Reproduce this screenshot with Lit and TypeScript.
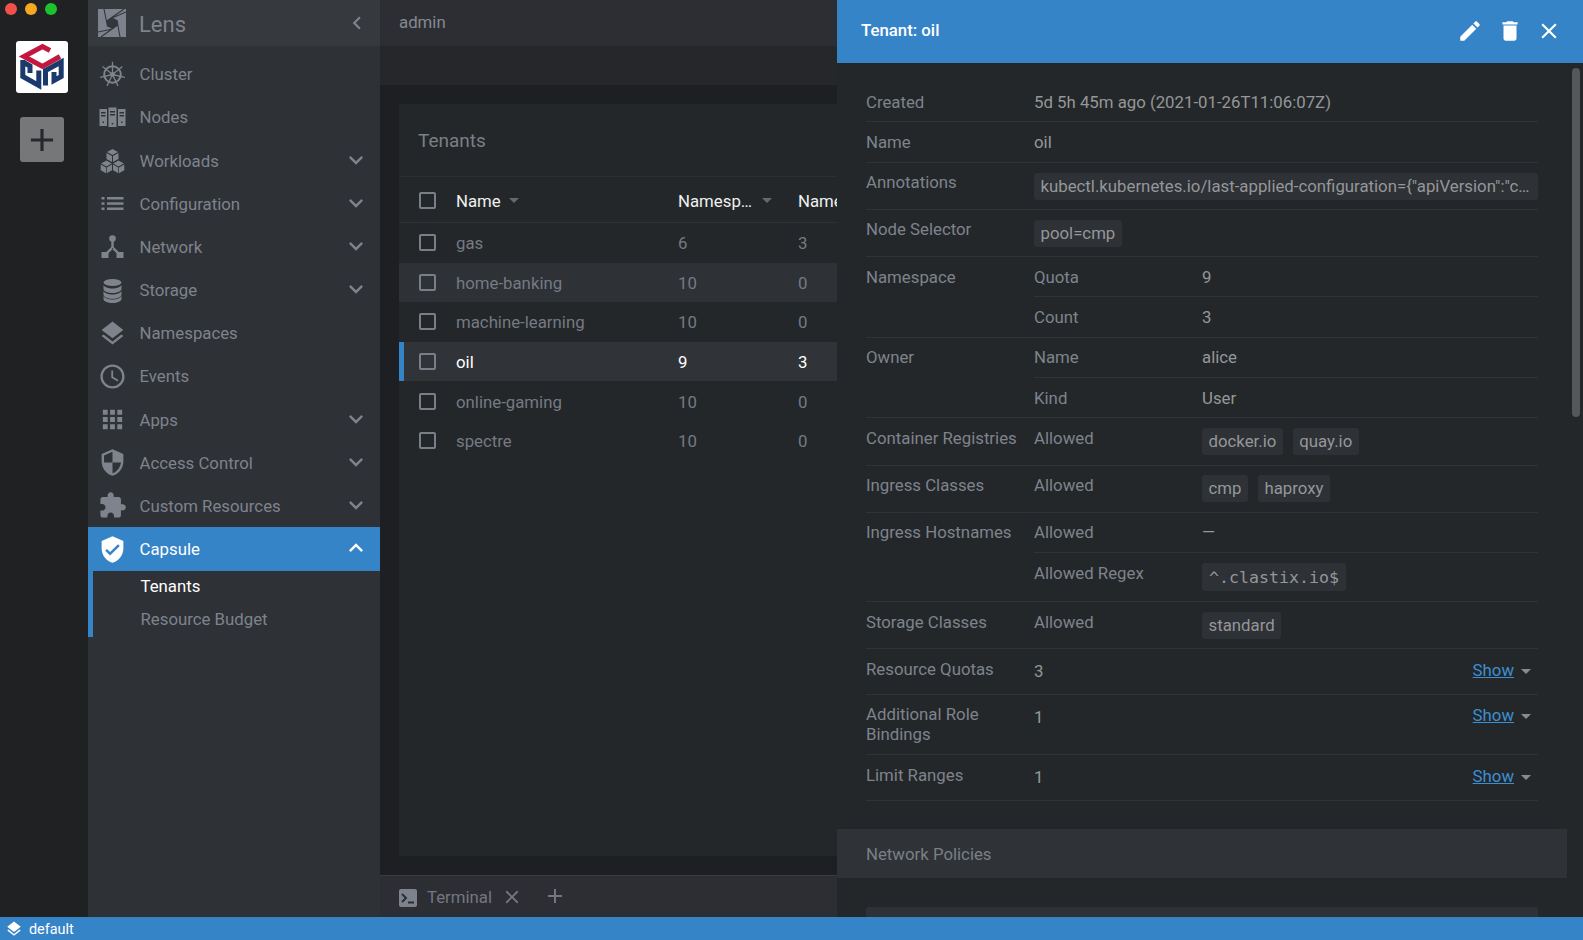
import { LitElement, html, css, svg } from "lit";
import { customElement } from "lit/decorators.js";

const M = (d: string) => svg`<path d=${d}></path>`;
const P = {
  more: "M16.59 8.59L12 13.17 7.41 8.59 6 10l6 6 6-6z",
  less: "M12 8l-6 6 1.41 1.41L12 10.83l4.59 4.58L18 14z",
  left: "M15.41 7.41L14 6l-6 6 6 6 1.41-1.41L10.83 12z",
  layers: "M11.99 18.54l-7.37-5.73L3 14.07l9 7 9-7-1.63-1.27-7.38 5.74zM12 16l7.36-5.73L21 9l-9-7-9 7 1.63 1.27L12 16z",
  clock: "M11.99 2C6.47 2 2 6.48 2 12s4.47 10 9.99 10C17.52 22 22 17.52 22 12S17.52 2 11.99 2zM12 20c-4.42 0-8-3.58-8-8s3.58-8 8-8 8 3.58 8 8-3.58 8-8 8zm.5-13H11v6l5.25 3.15.75-1.23-4.5-2.67z",
  apps: "M4 8h4V4H4v4zm6 12h4v-4h-4v4zm-6 0h4v-4H4v4zm0-6h4v-4H4v4zm6 0h4v-4h-4v4zm6-10v4h4V4h-4zm-6 4h4V4h-4v4zm6 6h4v-4h-4v4zm0 6h4v-4h-4v4z",
  shield: "M12 1L3 5v6c0 5.55 3.84 10.74 9 12 5.16-1.26 9-6.45 9-12V5l-9-4zm0 10.99h7c-.53 4.12-3.28 7.79-7 8.94V12H5V6.3l7-3.11v8.8z",
  puzzle: "M20.5 11H19V7c0-1.1-.9-2-2-2h-4V3.5C13 2.12 11.88 1 10.5 1S8 2.12 8 3.5V5H4c-1.1 0-1.99.9-1.99 2v3.8H3.5c1.49 0 2.7 1.21 2.7 2.7s-1.21 2.7-2.7 2.7H2V20c0 1.1.9 2 2 2h3.8v-1.5c0-1.49 1.21-2.7 2.7-2.7 1.49 0 2.7 1.21 2.7 2.7V22H17c1.1 0 2-.9 2-2v-4h1.5c1.38 0 2.5-1.12 2.5-2.5S21.88 11 20.5 11z",
  verified: "M12 1L3 5v6c0 5.55 3.84 10.74 9 12 5.16-1.26 9-6.45 9-12V5l-9-4zm-2 16l-4-4 1.41-1.41L10 14.17l6.59-6.59L18 9l-8 8z",
  edit: "M3 17.25V21h3.75L17.81 9.94l-3.75-3.75L3 17.25zM20.71 7.04c.39-.39.39-1.02 0-1.41l-2.34-2.34c-.39-.39-1.02-.39-1.41 0l-1.83 1.83 3.75 3.75 1.83-1.83z",
  trash: "M6 19c0 1.1.9 2 2 2h8c1.1 0 2-.9 2-2V7H6v12zM19 4h-3.5l-1-1h-5l-1 1H5v2h14V4z",
  close: "M19 6.41L17.59 5 12 10.59 6.41 5 5 6.41 10.59 12 5 17.59 6.41 19 12 13.41 17.59 19 19 17.59 13.41 12z",
  add: "M19 13h-6v6h-2v-6H5v-2h6V5h2v6h6v2z",
};

const mat = (d: string, cls = "ic") => html`<svg class=${cls} viewBox="0 0 24 24" fill="currentColor">${M(d)}</svg>`;

const wheel = html`<svg class="ic" viewBox="0 0 29 29" fill="none" stroke="currentColor">
  <circle cx="14.5" cy="14.5" r="8.3" stroke-width="2"></circle>
  <circle cx="14.5" cy="14.5" r="2.4" fill="currentColor" stroke="none"></circle>
  <path stroke-width="1.3" d="M14.5 14.5V1.800M14.5 14.500L24.400 6.600M14.500 14.500L26.900 17.300M14.500 14.500L20 25.900M14.500 14.500L9 25.900M14.500 14.500L2.100 17.300M14.500 14.500L4.600 6.600"></path>
</svg>`;

const nodes = html`<svg class="ic" viewBox="0 0 29 29" fill="currentColor">
  <path fill-rule="evenodd" d="M1.5 6h7.5v17H1.5zM3 9v1.5h4.5V9zM3 12v1.5h4.5V12zM4.5 18.5v1.5H6v-1.5z"></path>
  <path fill-rule="evenodd" d="M10.5 4.5h8V24h-8zM12 8v1.5h5V8zM12 11v1.5h5V11zM13.7 20v1.5h1.6V20z"></path>
  <path fill-rule="evenodd" d="M20 6h7.5v17H20zM21.5 9v1.5H26V9zM21.5 12v1.5H26V12zM23 18.5v1.5h1.5v-1.5z"></path>
</svg>`;

const cubes = html`<svg class="ic" viewBox="0 0 29 29" fill="currentColor">
  <path d="M14.5 3l5.5 3-5.5 3-5.5-3zM8.5 7l5.5 3v6l-5.5-3zM20.5 7l-5.5 3v6l5.5-3z"></path>
  <path d="M8.5 14.6l5.3 3-5.3 3-5.4-3zM2.7 18.5l5.3 3v5.700l-5.300-3zM14 18.500l-5.300 3v5.700l5.300-3z"></path>
  <path d="M20.500 14.600l5.400 3-5.400 3-5.300-3zM15 18.500l5.300 3v5.700l-5.300-3zM26.300 18.500l-5.300 3v5.700l5.300-3z"></path>
</svg>`;

const listIc = html`<svg class="ic" viewBox="0 0 29 29" fill="currentColor">
  <rect x="3.500" y="8" width="3" height="2.500"></rect><rect x="9" y="8" width="16.500" height="2.500"></rect>
  <rect x="3.500" y="13.300" width="3" height="2.500"></rect><rect x="9" y="13.300" width="16.500" height="2.500"></rect>
  <rect x="3.500" y="18.500" width="3" height="2.500"></rect><rect x="9" y="18.500" width="16.500" height="2.500"></rect>
</svg>`;

const net = html`<svg class="ic" viewBox="0 0 29 29" fill="currentColor">
  <circle cx="14.500" cy="6.500" r="3.300"></circle>
  <rect x="13.300" y="8" width="2.400" height="8"></rect>
  <path d="M13.500 14.800l1.700 1.700-6 6-1.700-1.700zM15.500 14.800l-1.700 1.700 6 6 1.700-1.700z"></path>
  <rect x="3.500" y="20" width="7" height="6"></rect><rect x="18.500" y="20" width="7" height="6"></rect>
</svg>`;

const db = html`<svg class="ic" viewBox="0 0 29 29" fill="currentColor">
  <ellipse cx="14.500" cy="6.500" rx="9" ry="3.500"></ellipse>
  <path d="M5.500 9c1 2.300 4.800 3.500 9 3.500s8-1.200 9-3.500v4c0 2.300-4 4-9 4s-9-1.700-9-4z"></path>
  <path d="M5.500 15.200c1 2.300 4.800 3.500 9 3.500s8-1.200 9-3.500v3.800c0 2.300-4 4-9 4s-9-1.700-9-4z" transform="translate(0 -.300)"></path>
  <path d="M5.500 20.500c1 2.300 4.800 3.500 9 3.500s8-1.200 9-3.500v3c0 2.300-4 4-9 4s-9-1.700-9-4z" transform="translate(0 -.500)"></path>
</svg>`;

const lensLogo = html`<svg class="lens" viewBox="0 0 28 28">
  <rect width="28" height="28" fill="#7d828d"></rect>
  <polygon points="14,8.500 19,11 19.500,16.500 14.500,20 9.500,17.500 8.700,12" fill="#33363b"></polygon>
  <g stroke="#33363b" stroke-width="1.100" fill="none">
    <path d="M14 9L28 3M19 11L22 28M19.500 16L3 28M14.500 20L0 23M9.500 17.500L6 0M8.700 12L26 0"></path>
  </g>
</svg>`;

const capsuleLogo = html`<svg class="logo" viewBox="0 0 52 52" fill="none">
  <path d="M34 9.500L26.500 5.500 8 15.500 26.500 25.500 44 15.500" stroke="#c4173f" stroke-width="5" stroke-linejoin="miter"></path>
  <path d="M6.800 19V35.500L22.800 44.500V29.500M6.800 21L14 25V32" stroke="#1b3a6c" stroke-width="5" stroke-linejoin="miter"></path>
  <path d="M29.500 44.500V29.500L45.200 21V35.500L38 39.500V31" stroke="#1b3a6c" stroke-width="5" stroke-linejoin="miter"></path>
</svg>`;

type Nav = { t: string; i: unknown; x?: boolean };
const nav: Nav[] = [
  { t: "Cluster", i: wheel },
  { t: "Nodes", i: nodes },
  { t: "Workloads", i: cubes, x: true },
  { t: "Configuration", i: listIc, x: true },
  { t: "Network", i: net, x: true },
  { t: "Storage", i: db, x: true },
  { t: "Namespaces", i: mat(P.layers) },
  { t: "Events", i: mat(P.clock) },
  { t: "Apps", i: mat(P.apps), x: true },
  { t: "Access Control", i: mat(P.shield), x: true },
  { t: "Custom Resources", i: mat(P.puzzle), x: true },
];

const tenants = [
  ["gas", "6", "3"],
  ["home-banking", "10", "0"],
  ["machine-learning", "10", "0"],
  ["oil", "9", "3"],
  ["online-gaming", "10", "0"],
  ["spectre", "10", "0"],
];

const tags = (...t: string[]) => html`<div class="tags">${t.map((x) => html`<span class="tag">${x}</span>`)}</div>`;
const row = (h: number, label: unknown, val: unknown, cls = "") =>
  html`<div class="row h${h} ${cls}"><div class="lbl">${label}</div><div class="val">${val}</div></div>`;
const sub = (h: number, label: string, val: unknown, cls = "") =>
  html`<div class="subrow h${h} ${cls}"><div>${label}</div><div>${val}</div></div>`;
const group = (label: string, cls: string, ...subs: unknown[]) =>
  html`<div class="row ${cls}"><div class="lbl">${label}</div><div class="subs">${subs}</div></div>`;
const show = (h: number, label: unknown, n: string, cls = "") =>
  html`<div class="row h${h} ${cls}"><div class="lbl">${label}</div><div class="val num">${n}</div>
    <div class="show"><a>Show</a><i class="arrow"></i></div></div>`;

@customElement("app-root")
export class AppRoot extends LitElement {
  static styles = css`
    :host { display: block; width: 1583px; height: 940px; overflow: hidden; position: relative;
      font-family: Roboto, "Liberation Sans", sans-serif; font-size: 16.8px; line-height: 20px; color: #858a92; }
    * { box-sizing: border-box; }
    .app { display: grid; grid-template-columns: 88px 292px 1fr; grid-template-rows: 917px 23px; height: 940px; }
    .rail { background: #202123; display: flex; flex-direction: column; align-items: center; position: relative; padding: 41px 4px 0 0; }
    .lights { position: absolute; left: 5px; top: 3px; display: flex; gap: 8px; }
    .lights i { width: 12px; height: 12px; border-radius: 50%; }
    .logoBox { width: 52px; height: 52px; background: #fff; border-radius: 3px; display: block; }
    .logo { display: block; width: 52px; height: 52px; }
    .addBtn { margin-top: 24px; width: 44px; height: 45px; background: #757779; border-radius: 3px; color: #26282b; display: flex; align-items: center; justify-content: center; }
    .addBtn svg { width: 38px; height: 38px; display: block; }

    .side { background: #2e3136; color: #7f838c; display: flex; flex-direction: column; }
    .sideHead { height: 46px; background: #36393e; display: flex; align-items: center; padding-left: 10px; margin-bottom: 6.6px; flex: none; }
    .lens { width: 28px; height: 28px; display: block; flex: none; }
    .sideHead span { font-size: 22px; margin-left: 13px; flex: 1; color: #7f838c; padding-top: 4px; }
    .sideHead svg.chev { width: 26px; height: 26px; margin-right: 10px; margin-top: -1px; }
    .item { height: 43.18px; display: flex; align-items: center; padding-left: 10px; flex: none; }
    .ic { width: 29px; height: 29px; display: block; flex: none; }
    .item span { margin-left: 12.5px; flex: 1; }
    .chev { width: 28px; height: 28px; margin: -2px 10px 0 0; display: block; flex: none; }
    .item.active { background: #3584c8; color: #fff; }
    .subnav { border-left: 5px solid #3584c8; height: 66px; flex: none; }
    .subnav div { height: 33px; line-height: 31px; padding-left: 47.5px; }
    .subnav .on { color: #fff; }

    .main { display: flex; flex-direction: column; background: #1e1f23; min-width: 0; }
    .topbar { height: 46px; background: #2c2e33; padding: 0 19px; line-height: 44px; color: #858a92; flex: none; }
    .tabs { height: 39px; background: #25272a; flex: none; }
    .content { flex: 1; padding: 19px 0 19px 19px; min-height: 0; display: flex; }
    .panel { flex: 1; background: #23272a; min-width: 0; overflow: hidden; }
    .ptitle { height: 73px; padding: 0 19px; line-height: 74px; font-size: 19px; color: #7b7f86; border-bottom: 1px solid #2b2e32; }
    .tr { display: grid; grid-template-columns: 57px 222px 120px 1fr; align-items: center; height: 39.6px; color: #767a82; }
    .tr > div:not(.cb) { padding-top: 1px; }
    .tr.head { height: 46px; color: #f0f0f0; border-bottom: 1px solid #2e3135; }
    .tr.head > div:not(.cb) { padding-top: 2px; }
    .tr.head .cb { margin-top: 2px; }
    .tr.hl { background: #2e3136; }
    .tr.sel { background: #303338; color: #fff; box-shadow: inset 5px 0 0 #3584c8; }
    .cb { width: 17px; height: 17px; margin-left: 20px; border: 2px solid #7a7e86; border-radius: 2px; }
    .hc { display: flex; align-items: center; }
    .sort { width: 0; height: 0; border-left: 5px solid transparent; border-right: 5px solid transparent; border-top: 5px solid #66686c; margin-left: 8px; }
    .hc + .hc .sort { margin-left: 10px; }
    .c1 { white-space: nowrap; }
    .term { height: 42px; background: #2c2e33; border-top: 1px solid #3a3c40; display: flex; align-items: center; padding-left: 19px; color: #737780; flex: none; }
    .termIc { width: 18px; height: 18px; background: #7d828d; border-radius: 2px; display: block; flex: none; margin-top: 2px; }
    .term span { margin-left: 10px; }
    .term .x { width: 22px; height: 22px; margin-left: 9px; display: block; }
    .term .p { width: 24px; height: 24px; margin: -1px 0 0 20px; display: block; }

    .status { grid-column: 1 / -1; background: #3584c8; color: #fff; font-size: 14.4px; display: flex; align-items: center; padding-left: 5px; line-height: 23px; }
    .status span { padding-top: 2px; }
    .status svg { width: 18px; height: 18px; display: block; margin-right: 6px; }

    .drawer { position: absolute; left: 837px; top: 0; width: 746px; height: 917px; background: #23272a; overflow: hidden; display: flex; flex-direction: column; }
    .dhead { height: 63px; background: #3584c8; display: flex; align-items: center; padding: 0 21px 0 24px; color: #fff; flex: none; }
    .dhead b { font-weight: 500; flex: 1; margin-top: -3px; }
    .dhead svg { width: 26px; height: 26px; display: block; margin-left: 13.500px; margin-top: -1px; }
    .scroll { position: absolute; left: 735px; top: 68px; width: 8px; height: 349px; border-radius: 4px; background: #55575b; }
    .dbody { padding: 18px 45px 0 29px; flex: 1; overflow: hidden; }
    .row { display: grid; grid-template-columns: 168px 1fr auto; border-bottom: 1px solid #2f3236; align-items: start; }
    .lbl { padding-top: 10px; color: #7f838b; }
    .val { padding-top: 10px; color: #959799; min-width: 0; }
    .val.num { padding-top: 12px; }
    .first .lbl, .first .val { padding-top: 11px; }
    .up > .lbl { padding-top: 9px; }
    .subs { grid-column: 2 / -1; color: #7f838b; }
    .subrow { display: grid; grid-template-columns: 168px 1fr; border-bottom: 1px solid #2f3236; padding-top: 10px; }
    .subrow.tight { padding-top: 9px; }
    .subrow:last-child { border-bottom: 0; }
    .subrow > div:last-child { color: #959799; min-width: 0; }
    .row .val { grid-column: 2 / -1; }
    .row .val.num { grid-column: 2; }
    .h39 { height: 39px; } .h40 { height: 40px; } .h41 { height: 41px; } .h46 { height: 46px; } .h47 { height: 47px; }
    .h48 { height: 48px; } .h49 { height: 49px; } .h60 { height: 60px; }
    .tags { display: flex; gap: 10px; }
    .tag { height: 27px; line-height: 27px; padding: 0 6.500px; background: #2e3136; border-radius: 3px; color: #959799; white-space: nowrap; display: block; }
    .wide { flex: 1; }
    .mono { font-family: "DejaVu Sans Mono", monospace; font-size: 16.6px; height: 28px; line-height: 30px; padding: 0 7px; display: inline-block; }
    .show { display: flex; align-items: center; padding-top: 11px; padding-right: 7px; }
    .up .show { padding-top: 10px; }
    .show a { color: #3d8fd0; text-decoration: underline; }
    .arrow { width: 0; height: 0; border-left: 5px solid transparent; border-right: 5px solid transparent; border-top: 5px solid #8a8a8a; margin-left: 7px; margin-top: 2px; }
    .band { margin: 28px -29px 0 -29px; height: 49px; line-height: 51px; background: #2f3337; padding-left: 29px; color: #7b7f86; }
    .card { margin-top: 29px; height: 40px; background: #2e3136; border-radius: 3px 3px 0 0; }
  `;

  render() {
    return html`
      <div class="app">
        <div class="rail">
          <div class="lights"><i style="background:#f2514b"></i><i style="background:#f7a81e"></i><i style="background:#1dc22f"></i></div>
          <div class="logoBox">${capsuleLogo}</div>
          <div class="addBtn">${mat(P.add, "")}</div>
        </div>
        <div class="side">
          <div class="sideHead">${lensLogo}<span>Lens</span>${mat(P.left, "chev")}</div>
          ${nav.map((n) => html`<div class="item">${n.i}<span>${n.t}</span>${n.x ? mat(P.more, "chev") : ""}</div>`)}
          <div class="item active">${mat(P.verified)}<span>Capsule</span>${mat(P.less, "chev")}</div>
          <div class="subnav"><div class="on">Tenants</div><div>Resource Budget</div></div>
        </div>
        <div class="main">
          <div class="topbar">admin</div>
          <div class="tabs"></div>
          <div class="content">
            <div class="panel">
              <div class="ptitle">Tenants</div>
              <div class="tr head">
                <div class="cb"></div>
                <div class="hc">Name<i class="sort"></i></div>
                <div class="hc">Namesp…<i class="sort"></i></div>
                <div class="c1">Name</div>
              </div>
              ${tenants.map(
                (t) => html`<div class="tr ${t[0] === "home-banking" ? "hl" : ""} ${t[0] === "oil" ? "sel" : ""}">
                  <div class="cb"></div><div>${t[0]}</div><div>${t[1]}</div><div>${t[2]}</div></div>`
              )}
            </div>
          </div>
          <div class="term">
            <svg class="termIc" viewBox="0 0 18 18" fill="none" stroke="#2c2e33" stroke-width="2"><path d="M3 5l4 4-4 4M9 13.500h6"></path></svg>
            <span>Terminal</span>
            ${mat(P.close, "x")}${mat(P.add, "p")}
          </div>
        </div>
        <div class="status">${mat(P.layers, "")}<span>default</span></div>
      </div>

      <div class="drawer">
        <div class="dhead"><b>Tenant: oil</b>${mat(P.edit, "")}${mat(P.trash, "")}${mat(P.close, "")}</div>
        <div class="dbody">
          ${row(41, "Created", "5d 5h 45m ago (2021-01-26T11:06:07Z)", "first")}
          ${row(41, "Name", "oil")}
          ${row(47, "Annotations", html`<div class="tags"><span class="tag wide">kubectl.kubernetes.io/last-applied-configuration={"apiVersion":"c…</span></div>`, "up")}
          ${row(47, "Node Selector", tags("pool=cmp"), "up")}
          ${group("Namespace", "", sub(40, "Quota", "9"), sub(40, "Count", "3"))}
          ${group("Owner", "up", sub(40, "Name", "alice", "tight"), sub(39, "Kind", "User"))}
          ${group("Container Registries", "", sub(47, "Allowed", tags("docker.io", "quay.io")))}
          ${group("Ingress Classes", "up", sub(46, "Allowed", tags("cmp", "haproxy"), "tight"))}
          ${group("Ingress Hostnames", "up", sub(40, "Allowed", "—", "tight"),
            sub(48, "Allowed Regex", html`<span class="tag mono">^.clastix.io$</span>`))}
          ${group("Storage Classes", "", sub(46, "Allowed", tags("standard")))}
          ${show(46, "Resource Quotas", "3")}
          ${show(60, html`Additional Role<br />Bindings`, "1", "up")}
          ${show(46, "Limit Ranges", "1")}
          <div class="band">Network Policies</div>
          <div class="card"></div>
        </div>
        <div class="scroll"></div>
      </div>
    `;
  }
}
